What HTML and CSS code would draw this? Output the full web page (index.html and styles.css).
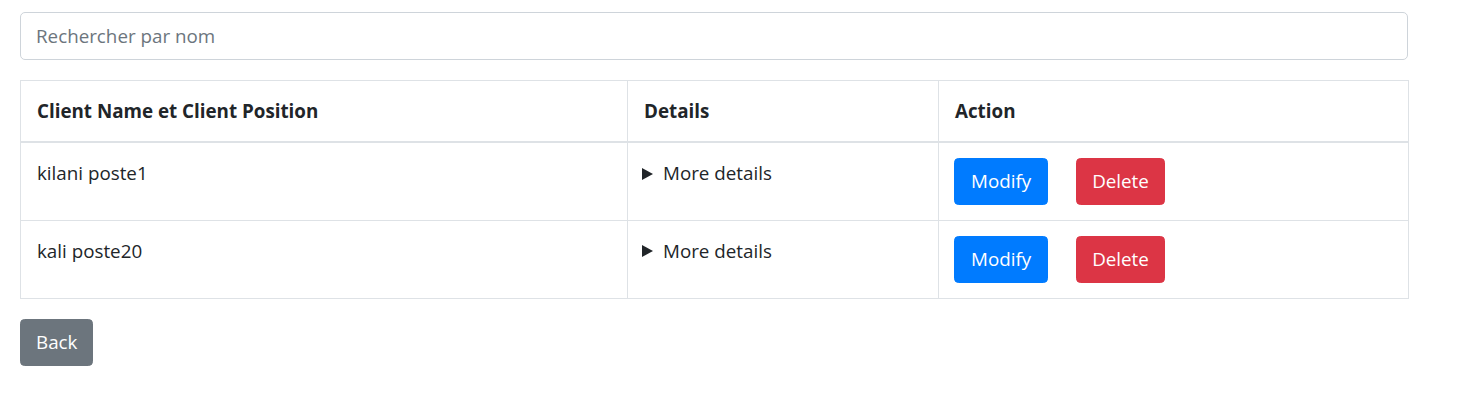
FILE: index.html
```html
<!DOCTYPE html>
<html lang="fr">
<head>
<meta charset="utf-8">
<title>Clients</title>
<link rel="stylesheet" href="styles.css">
</head>
<body>
<main class="page">
  <input class="search" type="text" placeholder="Rechercher par nom">
  <table class="clients">
    <colgroup>
      <col class="col-name">
      <col class="col-details">
      <col class="col-action">
    </colgroup>
    <thead>
      <tr>
        <th>Client Name et Client Position</th>
        <th>Details</th>
        <th>Action</th>
      </tr>
    </thead>
    <tbody>
      <tr>
        <td>kilani poste1</td>
        <td><details><summary>More details</summary></details></td>
        <td><div class="actions"><button class="btn btn-primary">Modify</button><button class="btn btn-danger">Delete</button></div></td>
      </tr>
      <tr>
        <td>kali poste20</td>
        <td><details><summary>More details</summary></details></td>
        <td><div class="actions"><button class="btn btn-primary">Modify</button><button class="btn btn-danger">Delete</button></div></td>
      </tr>
    </tbody>
  </table>
  <div class="footer">
    <button class="btn btn-secondary">Back</button>
  </div>
</main>
</body>
</html>
```
FILE: styles.css
```css
* { box-sizing: border-box; }
html, body { margin: 0; background: #fff; }
body {
  font-family: "Open Sans", "Noto Sans", sans-serif;
  font-size: 18.8px;
  line-height: 27px;
  color: #212529;
}
.page {
  width: 1388px;
  margin: 12px 0 0 20px;
  display: flex;
  flex-direction: column;
}
.search {
  display: block;
  width: 100%;
  height: 48px;
  padding: 0 15px;
  border: 1px solid #ced4da;
  border-radius: 5px;
  font: inherit;
  color: #495057;
  background: #fff;
  outline: none;
}
.search::placeholder { color: #6c757d; opacity: 1; }
.clients {
  margin-top: 20px;
  width: 100%;
  border-collapse: collapse;
  table-layout: fixed;
}
.col-name { width: 607px; }
.col-details { width: 311px; }
.col-action { width: 470px; }
.clients th, .clients td {
  border: 1px solid #dee2e6;
  text-align: left;
  vertical-align: top;
}
.clients thead th {
  font-weight: 700;
  border-bottom: 2px solid #dee2e6;
  padding: 17px 16px 16px;
}
.clients td { padding: 17px 16px 14px; height: 78px; }
details summary {
  cursor: pointer;
  list-style: none;
  display: flex;
  align-items: center;
}
details summary::-webkit-details-marker { display: none; }
details summary::before {
  content: "";
  width: 0;
  height: 0;
  border-left: 11px solid #212529;
  border-top: 6.5px solid transparent;
  border-bottom: 6.5px solid transparent;
  margin-left: -2px;
  margin-right: 10px;
}
.actions {
  display: flex;
  gap: 28px;
  margin: -2px 0 0 -1px;
}
.btn {
  font: inherit;
  height: 47px;
  padding: 0 16px;
  border: 1px solid transparent;
  border-radius: 4.5px;
  color: #fff;
  cursor: pointer;
}
.btn-danger { padding: 0 15px; }
.btn-secondary { padding: 0 15px; }
.btn-primary { background: #007bff; border-color: #007bff; }
.btn-danger { background: #dc3545; border-color: #dc3545; }
.btn-secondary { background: #6c757d; border-color: #6c757d; }
.footer {
  margin-top: 20px;
  display: flex;
}
```
